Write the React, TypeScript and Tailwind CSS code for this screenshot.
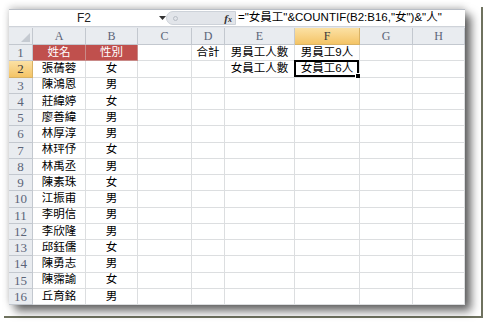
import React from "react";

const COLS = ["A", "B", "C", "D", "E", "F", "G", "H"];

const DATA: [string, string][] = [
  ["張蒨蓉", "女"],
  ["陳鴻恩", "男"],
  ["莊緯婷", "女"],
  ["廖善緯", "男"],
  ["林厚淳", "男"],
  ["林玶伃", "女"],
  ["林禹丞", "男"],
  ["陳素珠", "女"],
  ["江振甫", "男"],
  ["李明信", "男"],
  ["李欣隆", "男"],
  ["邱鈺儒", "女"],
  ["陳勇志", "男"],
  ["陳霈諭", "女"],
  ["丘育銘", "男"],
];

function cellText(row: number, col: number): string {
  if (row === 1) {
    if (col === 0) return "姓名";
    if (col === 1) return "性別";
    if (col === 3) return "合計";
    if (col === 4) return "男員工人數";
    if (col === 5) return "男員工9人";
    return "";
  }
  if (row === 2) {
    if (col === 4) return "女員工人數";
    if (col === 5) return "女員工6人";
  }
  const d = DATA[row - 2];
  if (d && col < 2) return d[col];
  return "";
}

const cjk = { fontFamily: '"Liberation Sans", "Noto Sans CJK TC", sans-serif' };
const serif = { fontFamily: '"Liberation Serif", "Noto Serif", serif' };

export default function App() {
  const rows = Array.from({ length: 16 }, (_, i) => i + 1);
  return (
    <div className="w-[484px] h-[322px] bg-white pt-[7px] pl-[4px] overflow-hidden">
      <div className="w-[479px] h-[311px] border-r-2 border-b-2 border-[#6f725f] pt-[2px] pl-[5px]">
        <div className="w-[456px] h-[296px] bg-white overflow-hidden flex flex-col shadow-[0_-2px_7px_rgba(0,0,0,0.2),6px_6px_9px_rgba(0,0,0,0.6)]">
          {/* formula bar */}
          <div className="h-[17px] flex border-t border-[#b9bec6] bg-white">
            <div className="w-[157px] flex items-center relative">
              <div className="w-[150px] text-center text-[12px] leading-none text-[#222]" style={cjk}>
                F2
              </div>
              <svg width="7" height="4" viewBox="0 0 7 4">
                <path d="M0 0 H7 L3.5 4 Z" fill="#333" />
              </svg>
            </div>
            <div className="w-[70px] h-[14px] mt-[1px] rounded-l-full bg-[#e2e5ea] border border-[#cdd2d9] flex items-center justify-between pl-[6px] pr-[3px]">
              <div className="w-[5px] h-[5px] rounded-full border border-[#b8bdc5]" />
              <span className="italic font-bold text-[11px] leading-none text-[#333]" style={serif}>
                f<span className="text-[8px]">x</span>
              </span>
            </div>
            <div className="flex-1 flex items-center pl-[2px] text-[11.5px] leading-none text-black whitespace-nowrap" style={cjk}>
              ="女員工"&amp;COUNTIF(B2:B16,"女")&amp;"人"
            </div>
          </div>
          <div className="h-[2px] bg-[#e3e6eb] border-t border-[#cfd3d9]" />
          {/* grid */}
          <div className="grid grid-cols-[24px_53px_52px_54px_33px_70px_65px_53px_52px] auto-rows-[16.25px] grid-rows-[17px]">
            <div className="h-[17px] bg-[#e9ecf0] border-r border-b border-[#c3c8cf] relative">
              <svg width="9" height="9" viewBox="0 0 9 9" className="absolute right-[2px] bottom-[2px]">
                <path d="M9 0 V9 H0 Z" fill="#c5cad1" />
              </svg>
            </div>
            {COLS.map((c) => (
              <div
                key={c}
                className={
                  "h-[17px] flex items-center justify-center border-r border-b text-[12px] leading-none " +
                  (c === "F"
                    ? "bg-gradient-to-b from-[#fbe1a4] to-[#f4c465] border-[#d8b265] text-[#3b3b3b]"
                    : "bg-[#e9ecf0] border-[#c3c8cf] text-[#5b6478]")
                }
                style={serif}
              >
                {c}
              </div>
            ))}
            {rows.map((r) => (
              <React.Fragment key={r}>
                <div
                  className={
                    "flex items-center justify-center border-r border-b text-[13px] leading-none " +
                    (r === 2
                      ? "bg-gradient-to-b from-[#fbe1a4] to-[#f4c465] border-[#d8b265] text-[#3b3b3b]"
                      : "bg-[#e9ecf0] border-[#c3c8cf] text-[#5b6478]")
                  }
                  style={serif}
                >
                  {r}
                </div>
                {COLS.map((c, ci) => {
                  const t = cellText(r, ci);
                  const header = r === 1 && ci < 2;
                  const selected = r === 2 && c === "F";
                  return (
                    <div
                      key={c}
                      className={
                        "relative flex items-center justify-center border-r border-b text-[11.5px] leading-none whitespace-nowrap " +
                        (header
                          ? "bg-[#c0504d] text-white border-[#c98a88]"
                          : "bg-white text-black border-[#dcdee0]")
                      }
                      style={cjk}
                    >
                      {t}
                      {selected && (
                        <div className="absolute -left-[1px] -top-[1px] right-0 bottom-0 border-2 border-black">
                          <div className="absolute -right-[4px] -bottom-[4px] w-[6px] h-[6px] bg-black border border-white" />
                        </div>
                      )}
                    </div>
                  );
                })}
              </React.Fragment>
            ))}
          </div>
        </div>
      </div>
    </div>
  );
}
